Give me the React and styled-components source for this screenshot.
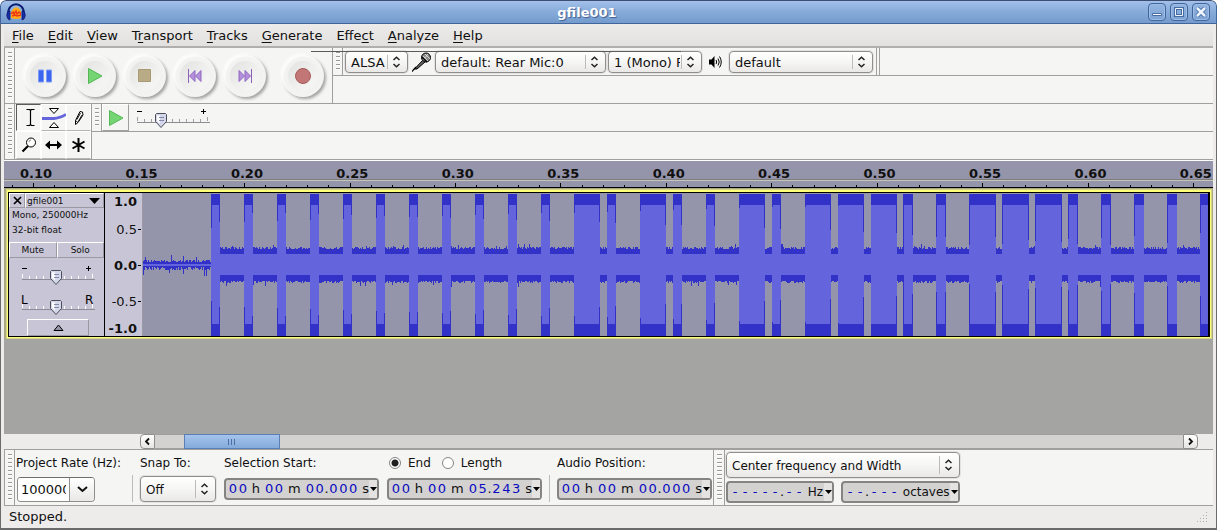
import React from "react";
import styled, { createGlobalStyle, css } from "styled-components";

const GlobalStyle = createGlobalStyle`
  *, *::before, *::after { box-sizing: border-box; }
  body { margin: 0; font-family: "DejaVu Sans", sans-serif; font-size: 13px; color: #101010; background: #fff; }
  button, select, input { font: inherit; color: inherit; margin: 0; }
  svg { display: block; }
`;

const LINE = "#a09f9e";
const PANEL = "#f5f5f4";

/* ---------- window frame ---------- */

const Window = styled.div`
  display: flex;
  flex-direction: column;
  min-height: 100vh;
  background: #edeceb;
  border-bottom: 2px solid #6b6b6b;
  border-radius: 6px 6px 0 0;
  overflow: hidden;
`;

const TitleBar = styled.header`
  display: flex;
  align-items: center;
  height: 24px;
  padding: 0 6px 0 5px;
  background: linear-gradient(#a3c0ea, #86abd9 50%, #749bcd);
  border-top: 1px solid #3c4f73;
  border-bottom: 1px solid #42669c;
  border-left: 1px solid #42669c;
  border-right: 1px solid #42669c;
  border-radius: 6px 6px 0 0;
`;

const Title = styled.h1`
  flex: 1;
  margin: 0;
  padding-top: 2px;
  text-align: center;
  font-size: 13px;
  line-height: 20px;
  color: #fff;
  text-shadow: 1px 1px 1px #3c5f96;
`;

const WindowButtons = styled.div`
  display: flex;
  gap: 4px;
`;

const WindowButton = styled.button`
  width: 18px;
  height: 18px;
  padding: 0;
  border: 1px solid #41669b;
  border-radius: 4px;
  background: linear-gradient(#93b5e2, #7da3d3);
  box-shadow: inset 0 0 0 1px #9dbce6;
`;

const Frame = styled.div`
  flex: 1;
  display: flex;
  flex-direction: column;
  border-left: 1px solid #6b6b6b;
  border-right: 1px solid #6b6b6b;
  padding: 0 3px;
`;

const MenuBar = styled.nav`
  display: flex;
  height: 24px;
  padding-left: 1px;
  border-bottom: 2px solid #b0afad;
  background: linear-gradient(#edecea, #e2e1df);
`;

const MenuButton = styled.button`
  padding: 2px 7px 0;
  border: 0;
  background: none;
  line-height: 20px;
  u { text-underline-offset: 2px; }
`;

/* ---------- toolbars ---------- */

const Dock = styled.div`
  position: relative;
  display: flex;
  background: ${PANEL};
  border-left: 1px solid ${LINE};
  border-bottom: 1px solid ${LINE};
`;

const Toolbar = styled.div`
  display: flex;
  border-right: 1px solid ${LINE};
`;

const ToolRows = styled.div`
  flex: 1;
  display: grid;
  grid-template-rows: 28px 27px;
`;

const ToolRow = styled.div`
  display: flex;
  border-bottom: ${(p) => (p.$last ? "0" : `1px solid ${LINE}`)};
`;

const Grip = styled.div`
  width: ${(p) => p.$width || 10}px;
  padding: 4px 2px 4px 3px;
  border-right: 1px solid ${LINE};
  &::before {
    content: "";
    display: block;
    height: 100%;
    background: repeating-linear-gradient(#9a9998 0 1px, #fff 1px 2px, transparent 2px 4px);
  }
`;

const TransportButtons = styled.div`
  display: flex;
  align-items: center;
  height: 55px;
  padding: 0 4px 0 5px;
`;

const RoundButton = styled.button`
  display: grid;
  place-items: center;
  width: 42px;
  height: 42px;
  margin: 0 4px;
  padding: 0;
  border: 0;
  border-radius: 50%;
  background: #f3f3f2;
  box-shadow: 2px 2px 3px #a4a4a2, -1px -1px 3px #fff, inset 1px 1px 2px #fff;
  ${(p) => p.$apart && css`margin-left: 12px;`}
`;

const Dish = styled.span`
  display: grid;
  place-items: center;
  width: 30px;
  height: 30px;
  border-radius: 50%;
  background: linear-gradient(135deg, #e2e2e1, #f4f4f3 75%);
  box-shadow: 0 0 3px 1px #f0f0ef;
`;

const StrayLine = styled.div`
  position: absolute;
  top: 3px;
  left: 306px;
  width: 370px;
  height: 1px;
  background: #5c5b5a;
`;

const DeviceTools = styled.div`
  display: flex;
  align-items: center;
  padding: 0 3px 0 2px;
  border-right: 1px solid ${LINE};
`;

const EndCap = styled.div`
  width: 3px;
  border-right: 1px solid ${LINE};
`;

const IconCell = styled.span`
  display: grid;
  place-items: center;
  width: ${(p) => p.$width}px;
`;

const SelectBox = styled.span`
  position: relative;
  display: block;
  width: ${(p) => p.$width}px;
  svg { position: absolute; right: 7px; top: 50%; margin-top: -6px; pointer-events: none; }
  &::after {
    content: "";
    position: absolute;
    right: 20px;
    top: 4px;
    bottom: 4px;
    border-left: 1px solid #bdbcba;
  }
`;

const Select = styled.select`
  appearance: none;
  display: block;
  width: 100%;
  height: ${(p) => p.$height}px;
  padding: 2px 21px 0 5px;
  border: 1px solid #8f8e8c;
  border-radius: 4px;
  background: linear-gradient(#fff, #f6f6f5 50%, #e9e8e7);
  font-size: ${(p) => p.$size || 13}px;
  box-shadow: 0 0 0 1px #e3e2e1;
`;

const ToolGrid = styled.div`
  display: grid;
  grid-template-columns: repeat(3, 25px);
  grid-template-rows: 27px 28px;
  padding-left: 1px;
`;

const ToolButton = styled.button`
  display: grid;
  place-items: center;
  padding: ${(p) => (p.$on ? "0 0 0 3px" : "0")};
  border: 1px solid;
  border-color: ${(p) => (p.$on ? "#5a5a5a #fff #fff #5a5a5a" : "#fff #fff #b5b4b2 #fff")};
  background: ${PANEL};
`;

const PlayButton = styled.button`
  display: grid;
  place-items: center;
  width: 27px;
  padding: 0;
  border: 1px solid;
  border-color: #fff ${LINE} ${LINE} #fff;
  background: ${PANEL};
`;

const SliderBox = styled.span`
  position: relative;
  display: block;
  width: 74px;
  height: 20px;
  margin: ${(p) => p.$margin};
  input { position: absolute; inset: 0; width: 100%; height: 100%; opacity: 0; }
`;

/* ---------- timeline ---------- */

const Ruler = styled.div`
  height: 28px;
  border-top: 1px solid #fff;
  border-bottom: 1px solid #000;
  background: #9494aa;
`;

const RulerLabels = styled.div`
  display: flex;
  justify-content: space-between;
  height: 19px;
  padding: 5px 1px 0 16px;
  border-bottom: 1px solid #7d7d80;
  font-weight: bold;
  line-height: 16px;
`;

const RulerTicks = styled.div`
  display: flex;
  justify-content: space-between;
  height: 7px;
  padding: 2px 18px 0 8px;
  border-top: 1px solid #c4c4b8;
`;

const Tick = styled.i`
  width: 1px;
  height: ${(p) => (p.$major ? 4 : 2)}px;
  margin-top: ${(p) => (p.$major ? 0 : 2)}px;
  background: #000;
`;

/* ---------- track ---------- */

const TrackArea = styled.main`
  flex: 1;
  background: #a4a4a2;
`;

const TrackOutline = styled.div`
  padding: 2px 2px 1px 3px;
  background: #a9a984;
  margin-bottom: 1px;
`;

const Track = styled.section`
  display: flex;
  height: 148px;
  border: 1px solid #ffff78;
  border-top-width: 2px;
  outline: 1px solid #d4d488;
`;

const TrackBody = styled.div`
  flex: 1;
  display: flex;
  min-width: 0;
  border: 1px solid #000;
  border-right-width: 2px;
  background: #c8c6d6;
`;

const TrackPanel = styled.div`
  flex: none;
  display: flex;
  flex-direction: column;
  width: 96px;
  border-right: 1px solid #000;
  font-size: 9px;
`;

const bevel = css`
  padding: 0;
  border: 1px solid;
  border-color: #fff #9b9aa4 #9b9aa4 #fff;
  background: #c8c6d6;
`;

const TrackTitle = styled.div`
  display: grid;
  grid-template-columns: 16px 1fr;
  height: 15px;
`;

const BevelButton = styled.button`
  ${bevel}
  display: flex;
  align-items: center;
  justify-content: ${(p) => (p.$spread ? "space-between" : "center")};
  ${(p) => p.$spread && css`padding: 0 3px 0 1px;`}
`;

const TrackInfo = styled.p`
  margin: 0;
  height: 34px;
  padding-left: 3px;
  line-height: 15px;
  white-space: nowrap;
`;

const MuteSolo = styled.div`
  display: grid;
  grid-template-columns: 1fr 1fr;
  height: 16px;
`;

const Collapse = styled.button`
  ${bevel}
  display: grid;
  place-items: center;
  width: 62px;
  height: 17px;
  margin: 0 auto 0 18px;
`;

const Scale = styled.div`
  flex: none;
  display: grid;
  grid-template-rows: 16px 40px 32px 40px 1fr;
  align-items: center;
  width: 38px;
  border-right: 1px solid #9b9aa4;
`;

const ScaleMark = styled.span`
  display: flex;
  align-items: center;
  justify-content: flex-end;
  padding-right: ${(p) => (p.$tick ? 1 : 5)}px;
  font-weight: ${(p) => (p.$bold ? "bold" : "normal")};
  line-height: 15px;
  &::after {
    content: "";
    display: ${(p) => (p.$tick ? "block" : "none")};
    width: 3px;
    height: 1px;
    margin-left: 1px;
    background: #000;
  }
`;

const WaveSvg = styled.svg`
  flex: 1;
  min-width: 0;
  height: 100%;
`;

/* ---------- scroll bar ---------- */

const ScrollRow = styled.div`
  display: flex;
  height: 16px;
  padding: 0 15px 0 136px;
  border-bottom: 1px solid ${LINE};
`;

const ScrollButton = styled.button`
  display: grid;
  place-items: center;
  width: 15px;
  padding: 0;
  border: 1px solid #8f8e8c;
  border-radius: ${(p) => (p.$right ? "0 4px 4px 0" : "4px 0 0 4px")};
  background: linear-gradient(#fff, #e6e5e4);
`;

const Trough = styled.div`
  flex: 1;
  padding-left: 29px;
  background: #d3d2d0;
  border: solid ${LINE};
  border-width: 1px 0;
`;

const Thumb = styled.div`
  display: grid;
  place-items: center;
  width: 10%;
  max-width: 96px;
  height: 15px;
  margin-top: -1px;
  border: 1px solid #5a7fb4;
  background: linear-gradient(#a5c3ec, #85abdb);
`;

/* ---------- selection toolbar ---------- */

const SelectionTools = styled.div`
  display: flex;
  height: 55px;
  padding-left: 1px;
  font-size: 12px;
`;

const Field = styled.div`
  display: grid;
  grid-template-rows: 24px 28px;
  align-items: center;
  width: ${(p) => p.$width}px;
  padding: 1px 0 0;
  > label, > span { white-space: nowrap; }
`;

const Divider = styled.i`
  width: 1px;
  height: 27px;
  margin: 25px 7px 0 ${(p) => p.$left}px;
  background: #bdbcba;
`;

const RateBox = styled.div`
  display: flex;
  width: 78px;
  height: 25px;
  margin-left: 1px;
  border: 1px solid #8f8e8c;
  border-top-color: #6f6e6c;
  border-radius: 4px;
  background: #fff;
  overflow: hidden;
`;

const RateInput = styled.input`
  width: 51px;
  min-width: 0;
  padding: 0 0 0 3px;
  border: 0;
  border-right: 3px solid #fff;
  background: #fff;
  font-size: 13px;
`;

const RateDrop = styled.button`
  flex: 1;
  display: grid;
  place-items: center;
  padding: 0;
  border: 0;
  border-left: 1px solid #8f8e8c;
  background: linear-gradient(#fff, #e9e8e7);
`;

const TimeBox = styled.div`
  display: flex;
  align-items: stretch;
  width: ${(p) => p.$width}px;
  height: 22px;
  padding-left: 2px;
  border: 2px solid #858483;
  border-radius: 4px;
  background: #d3d2d1;
  font-size: ${(p) => p.$size || 13}px;
  line-height: 18px;
  white-space: pre;
`;

const Digit = styled.b`
  width: ${(p) => (p.$dot ? 4 : 10)}px;
  font-weight: normal;
  font-size: 13px;
  text-align: center;
  color: ${(p) => (p.$dot ? "#101010" : "#0a0ac0")};
`;

const TimeDrop = styled.button`
  display: grid;
  place-items: center;
  flex: none;
  width: 8px;
  margin: 0 0 0 auto;
  padding: 0;
  border: 0;
  background: #e4e3e2;
`;

const RadioRow = styled.div`
  display: flex;
  align-items: center;
  padding-left: 2px;
  label { margin: 0 11px 0 7px; }
`;

const Radio = styled.input`
  appearance: none;
  width: 12px;
  height: 12px;
  border: 1px solid #858483;
  border-radius: 50%;
  background: #fff;
  &:checked { background: radial-gradient(circle, #202020 0 3px, #fff 4px); }
`;

const FrequencyTools = styled.div`
  display: flex;
  flex-direction: column;
  gap: 3px;
  padding: 2px 0 0 1px;
  font-size: 12px;
`;

const FrequencyPair = styled.div`
  display: flex;
  gap: 7px;
`;

const StatusBar = styled.footer`
  display: flex;
  justify-content: space-between;
  align-items: flex-end;
  height: 22px;
  padding: 0 4px 4px 5px;
  line-height: 15px;
`;

/* ---------- drawings ---------- */

const AppIcon = () => (
  <svg width="20" height="20" viewBox="0 0 20 20" aria-hidden="true">
    <path d="M2 12C2 -1 18 -1 18 12" fill="none" stroke="#0b1d70" strokeWidth="2" />
    <path d="M5 16V10Q7 6 10 5q4 1 5 5v6q-5 2-10 0z" fill="#ffab1c" />
    <path d="M5 12l2-2 1 2 2-3 1 3 2-2 2 2M6 14l3-1 2 1 4-1" fill="none" stroke="#ec3414" strokeWidth="1.4" />
    <path d="M3 9q-4 3-1 8l2 1V9zM17 9q4 3 1 8l-2 1V9z" fill="#1a2ea8" stroke="#0a1468" strokeWidth=".7" />
  </svg>
);

const Chevrons = () => (
  <svg width="9" height="12" viewBox="0 0 9 12" fill="none" stroke="#222" strokeWidth="1.5" aria-hidden="true">
    <path d="M1.5 4L4.5 1.3 7.5 4M1.5 8l3 2.7L7.5 8" />
  </svg>
);

const DownTriangle = ({ w = 7, h = 4, fill = "#000" }) => (
  <svg width={w} height={h} viewBox="0 0 8 5" preserveAspectRatio="none" aria-hidden="true">
    <path d="M0 0h8L4 5z" fill={fill} />
  </svg>
);

const PlayShape = () => (
  <svg width="16" height="18" viewBox="0 0 16 18" aria-hidden="true">
    <path d="M1.5 1.5L15 9 1.5 16.5z" fill="#74d572" stroke="#55b858" />
  </svg>
);

const TRANSPORT = [
  ["Pause", <svg width="14" height="14" viewBox="0 0 14 14"><path d="M.5 1h5v12h-5zM8.500 1h5v12h-5z" fill="#3c66f0" stroke="#7c9af6" /></svg>],
  ["Play", <PlayShape />],
  ["Stop", <svg width="14" height="14" viewBox="0 0 14 14"><path d="M.5 .5h12v12H.5z" fill="#b8ab86" stroke="#a89a72" /></svg>],
  ["Skip to start", <svg width="14" height="14" viewBox="0 0 14 14"><path d="M.5 0v14" stroke="#8a62b8" /><path d="M7 1.5v11L1.5 7zM13 1.5v11L7.5 7z" fill="#b38fdc" stroke="#9067c0" /></svg>],
  ["Skip to end", <svg width="14" height="14" viewBox="0 0 14 14"><path d="M13.5 0v14" stroke="#8a62b8" /><path d="M1 1.5v11L6.5 7zM7 1.5v11L12.5 7z" fill="#b38fdc" stroke="#9067c0" /></svg>],
  ["Record", <svg width="18" height="18" viewBox="0 0 18 18"><circle cx="9" cy="9" r="7.5" fill="#c27676" stroke="#a65c5c" /></svg>],
];

const TOOLS = [
  ["Selection tool", <svg width="9" height="17" viewBox="0 0 9 17" fill="none" stroke="#000" strokeWidth="1.200"><path d="M.5 .5h3l1 1 1-1h3M4.5 1v15M.5 16.5h3l1-1 1 1h3" /></svg>],
  ["Envelope tool", <svg width="24" height="20" viewBox="0 0 24 20"><path d="M0 10.500h12q5 0 12-4" fill="none" stroke="#6464dc" strokeWidth="2.800" /><path d="M7.5 .5h9L12 5.5zM7.5 19.5h9L12 14.5z" fill="#fff" stroke="#000" /></svg>],
  ["Draw tool", <svg width="10" height="16" viewBox="0 0 10 16"><path d="M6 1.5L8.5 2 9 5 4 12.5 1.5 14.5V10.500z" fill="#fff" stroke="#000" /><path d="M1.500 10.500L4 12.500M6.500 3L3 9.500M8 5L4.500 11" stroke="#000" strokeWidth=".9" /></svg>],
  ["Zoom tool", <svg width="16" height="16" viewBox="0 0 16 16"><circle cx="10" cy="5.500" r="4.500" fill="#fff" stroke="#000" /><path d="M7 9L1.500 14.500" stroke="#000" strokeWidth="2.200" /><path d="M8 5q0-2 2-2" fill="none" stroke="#888" /></svg>],
  ["Time shift tool", <svg width="17" height="10" viewBox="0 0 17 10"><path d="M3 5h11" stroke="#000" strokeWidth="1.800" /><path d="M5 .5v9L0 5zM12 .5v9L17 5z" /></svg>],
  ["Multi-tool", <svg width="13" height="14" viewBox="0 0 13 14" stroke="#000" strokeWidth="2"><path d="M6.500 0v14M.5 3.500l12 7M12.500 3.500l-12 7" /></svg>],
];

const Mic = () => (
  <svg width="20" height="20" viewBox="0 0 20 20" aria-hidden="true">
    <path d="M11 8L13 10 5 17 2.500 17z" fill="#666" stroke="#000" />
    <path d="M4 15L0 19.500" stroke="#000" strokeWidth="1.200" />
    <circle cx="14" cy="5.500" r="4.500" fill="#888" stroke="#000" />
    <path d="M11 4l5 5M13 2l5 5M16 2l-5 6" stroke="#e8e8e8" strokeWidth=".8" />
    <path d="M10 5l5 5" stroke="#000" strokeWidth="1.500" />
  </svg>
);

const Speaker = () => (
  <svg width="14" height="14" viewBox="0 0 14 14" aria-hidden="true">
    <path d="M0 4.500h2.500L5.500 1v12L2.500 9.500H0z" />
    <path d="M7 5q1.500 2 0 4M9 3.500q2.500 3.500 0 7M10.500 1.500q3.500 5.500 0 11" fill="none" stroke="#000" />
  </svg>
);

function Slider({ label, value, ends, margin, tick = "#fff" }) {
  const x = 18 + Math.round(value * 34);
  return (
    <SliderBox $margin={margin}>
      <svg width="74" height="20" viewBox="0 0 74 20" overflow="visible" aria-hidden="true">
        {ends === "pan" ? (
          <g fontSize="12"><text x="-1" y="9">L</text><text x="63" y="9">R</text></g>
        ) : (
          <path d="M0 3.500h5M64 3.500h5M66.500 1v5" stroke="#000" />
        )}
        <g stroke={tick} shapeRendering="crispEdges">
          {Array.from({ length: 11 }, (_, i) => (
            <path key={i} d={`M${i * 7 + 0.5} ${i % 10 ? 11 : 9}v4`} />
          ))}
        </g>
        <path d="M0 14.500h73" stroke="#8e8d96" />
        <path d={`M${x - 5.500} 6.500l1-1h9l1 1v7l-5.500 6-5.500-6z`} fill="#d4d6ea" stroke="#4c4e5a" />
        <path d={`M${x - 4} 7.500h3v8l-3-3z`} fill="#fff" />
        <path d={`M${x - 2} 9.500h5M${x - 2} 12.500h5`} stroke="#8487a8" />
      </svg>
      <input type="range" min="0" max="100" defaultValue={value * 100} aria-label={label} />
    </SliderBox>
  );
}

/* Loud bursts of the signal: start, width, depth of the left and right edge. */
const BURSTS = [
  [68, 9, 35, 29], [101, 9, 29, 20], [134, 9, 28, 20], [167, 9, 27, 21], [200, 9, 26, 22],
  [233, 9, 25, 23], [266, 9, 24, 24], [299, 9, 23, 25], [332, 9, 22, 26], [365, 9, 21, 27],
  [398, 9, 20, 28], [431, 26, 20, 29], [464, 9, 19, 30], [497, 26, 18, 32], [530, 9, 17, 32],
  [563, 9, 16, 33], [596, 26, 15, 35], [629, 9, 14, 36], [662, 26, 14, 37], [695, 26, 13, 39],
  [728, 26, 12, 40], [760, 10, 71, 42], [793, 10, 44, 44], [826, 27, 52, 44], [859, 27, 51, 47],
  [892, 27, 48, 49], [925, 10, 46, 51], [958, 10, 45, 52], [991, 10, 43, 12], [1024, 10, 50, 12],
  [1057, 8, 40, 12],
];

function noise(seed) {
  let s = seed;
  return () => {
    s = (s * 1103515245 + 12345) % 2147483648;
    return s / 2147483648;
  };
}

function buildNoise() {
  const rnd = noise(7);
  let d = "";
  for (let x = 0; x < 68; x++) {
    const up = 2 + Math.floor(rnd() * 3) + (rnd() > 0.92 ? 5 : 0);
    const down = 2 + Math.floor(rnd() * 4) + (rnd() > 0.92 ? 6 : 0);
    d += `M${x} ${71 - up}h1v${up + down + 1}h-1z`;
  }
  for (let x = 68; x < 1065; x++) {
    const up = Math.floor(rnd() * 3) + (rnd() > 0.95 ? 3 : 0);
    const down = Math.floor(rnd() * 2.6) + (rnd() > 0.98 ? 4 : 0);
    d += `M${x} ${56 - up}h1v${32 + up + down}h-1z`;
  }
  return d;
}

const NOISE = buildNoise();
const burstPath = BURSTS.map(([x, w]) => `M${x} 1h${w}v142h-${w}z`).join("");
const corePath = BURSTS.map(([x, w, l, r]) =>
  `M${x + 1} 12h${w - 2}v119h-${w - 2}zM${x} ${l}h1v${143 - 2 * l}h-1zM${x + w - 1} ${r}h1v${143 - 2 * r}h-1z`
).join("");

const Waveform = () => (
  <WaveSvg viewBox="0 0 1065 143" preserveAspectRatio="none" shapeRendering="crispEdges" role="img" aria-label="Waveform of gfile001">
    <path d="M0 0h1065v143H0z" fill="#9494aa" />
    <path d={NOISE} fill="#3232c8" />
    <path d="M0 71h68v2H0z" fill="#6464dc" />
    <path d={burstPath} fill="#3232c8" />
    <path d={corePath} fill="#6464dc" />
    <path d="M68 61h997v21H68z" fill="#6464dc" />
  </WaveSvg>
);

/* ---------- composed controls ---------- */

function Combo({ label, width, height = 22, size, options, id }) {
  return (
    <SelectBox $width={width}>
      <Select id={id} aria-label={label} $height={height} $size={size}>
        {options.map((o) => <option key={o}>{o}</option>)}
      </Select>
      <Chevrons />
    </SelectBox>
  );
}

function Counter({ label, width, value, size }) {
  return (
    <TimeBox role="group" aria-label={label} $width={width} $size={size}>
      {value.split("").map((c, i) =>
        /[\d.-]/.test(c) ? <Digit key={i} $dot={c === "."}>{c}</Digit> : <span key={i}>{c}</span>
      )}
      <TimeDrop aria-label={`${label} format`}><DownTriangle /></TimeDrop>
    </TimeBox>
  );
}

const MENUS = [["", "F", "ile"], ["", "E", "dit"], ["", "V", "iew"], ["T", "r", "ansport"], ["", "T", "racks"], ["", "G", "enerate"], ["Effe", "c", "t"], ["", "A", "nalyze"], ["", "H", "elp"]];
const TIMES = ["0.10", "0.15", "0.20", "0.25", "0.30", "0.35", "0.40", "0.45", "0.50", "0.55", "0.60", "0.65"];

export default function App() {
  return (
    <Window>
      <GlobalStyle />
      <TitleBar>
        <AppIcon />
        <Title>gfile001</Title>
        <WindowButtons>
          <WindowButton aria-label="Minimize">
            <svg width="16" height="16" viewBox="0 0 16 16"><path d="M3.500 9.500h9v2h-9z" fill="#fff" stroke="#466ca3" /></svg>
          </WindowButton>
          <WindowButton aria-label="Maximize">
            <svg width="16" height="16" viewBox="0 0 16 16" fill="none"><path d="M4.500 4.500h7v7h-7z" stroke="#466ca3" strokeWidth="3" /><path d="M4.500 4.500h7v7h-7z" stroke="#eef4fc" strokeWidth="1" /></svg>
          </WindowButton>
          <WindowButton aria-label="Close">
            <svg width="16" height="16" viewBox="0 0 16 16" fill="none"><path d="M4 4l8 8M12 4l-8 8" stroke="#466ca3" strokeWidth="4.500" /><path d="M4 4l8 8M12 4l-8 8" stroke="#eef4fc" strokeWidth="2.500" /></svg>
          </WindowButton>
        </WindowButtons>
      </TitleBar>

      <Frame>
        <MenuBar>
          {MENUS.map(([a, k, b]) => <MenuButton key={a + k + b}>{a}<u>{k}</u>{b}</MenuButton>)}
        </MenuBar>

        <Dock>
          <Toolbar>
            <Grip />
            <TransportButtons>
              {TRANSPORT.map(([name, icon]) => (
                <RoundButton key={name} aria-label={name} $apart={name === "Record"}><Dish>{icon}</Dish></RoundButton>
              ))}
            </TransportButtons>
          </Toolbar>
          <ToolRows>
            <ToolRow>
              <Grip />
              <DeviceTools>
                <Combo label="Audio host" width={63} options={["ALSA"]} />
                <IconCell $width={27}><Mic /></IconCell>
                <Combo label="Recording device" width={171} options={["default: Rear Mic:0"]} />
                <IconCell $width={2} />
                <Combo label="Recording channels" width={94} options={["1 (Mono) Rear Mic"]} />
                <IconCell $width={27}><Speaker /></IconCell>
                <Combo label="Playback device" width={144} options={["default"]} />
              </DeviceTools>
              <EndCap />
            </ToolRow>
          </ToolRows>
          <StrayLine />
        </Dock>

        <Dock>
          <Toolbar>
            <Grip />
            <ToolGrid>
              {TOOLS.map(([name, icon], i) => <ToolButton key={name} aria-label={name} $on={i === 0}>{icon}</ToolButton>)}
            </ToolGrid>
          </Toolbar>
          <ToolRows>
            <ToolRow>
              <Grip />
              <PlayButton aria-label="Play at speed"><PlayShape /></PlayButton>
              <Slider label="Playback speed" value={0.17} margin="4px 0 0 8px" tick="#a09f9e" />
            </ToolRow>
          </ToolRows>
        </Dock>

        <Ruler>
          <RulerLabels>{TIMES.map((t) => <span key={t}>{t}</span>)}</RulerLabels>
          <RulerTicks>{Array.from({ length: 57 }, (_, i) => <Tick key={i} $major={i % 5 === 1} />)}</RulerTicks>
        </Ruler>

        <TrackArea>
          <TrackOutline>
            <Track>
              <TrackBody>
                <TrackPanel>
                  <TrackTitle>
                    <BevelButton aria-label="Close track">
                      <svg width="9" height="9" viewBox="0 0 9 9"><path d="M1 1l7 7M8 1L1 8" stroke="#000" strokeWidth="1.700" /></svg>
                    </BevelButton>
                    <BevelButton $spread>gfile001<DownTriangle w={11} h={6} /></BevelButton>
                  </TrackTitle>
                  <TrackInfo>Mono, 250000Hz<br />32-bit float</TrackInfo>
                  <MuteSolo>
                    <BevelButton>Mute</BevelButton>
                    <BevelButton>Solo</BevelButton>
                  </MuteSolo>
                  <Slider label="Gain" value={0.47} margin="7px 0 10px 13px" />
                  <Slider label="Pan" value={0.47} ends="pan" margin="0 0 4px 13px" />
                  <Collapse aria-label="Collapse track">
                    <svg width="11" height="7" viewBox="0 0 11 7"><path d="M1 6.500h9L5.500 1z" fill="#9494aa" stroke="#000" /></svg>
                  </Collapse>
                </TrackPanel>
                <Scale>
                  <ScaleMark $bold>1.0</ScaleMark>
                  <ScaleMark $tick>0.5</ScaleMark>
                  <ScaleMark $bold $tick>0.0</ScaleMark>
                  <ScaleMark $tick>-0.5</ScaleMark>
                  <ScaleMark $bold>-1.0</ScaleMark>
                </Scale>
                <Waveform />
              </TrackBody>
            </Track>
          </TrackOutline>
        </TrackArea>

        <ScrollRow>
          <ScrollButton aria-label="Scroll left">
            <svg width="7" height="9" viewBox="0 0 7 9"><path d="M5 1.500L2 4.500l3 3" fill="none" stroke="#111" strokeWidth="1.800" /></svg>
          </ScrollButton>
          <Trough>
            <Thumb>
              <svg width="8" height="6" viewBox="0 0 8 6"><path d="M.5 0v6M3.500 0v6M6.500 0v6" stroke="#4a6fa5" /></svg>
            </Thumb>
          </Trough>
          <ScrollButton $right aria-label="Scroll right">
            <svg width="7" height="9" viewBox="0 0 7 9"><path d="M2 1.500l3 3-3 3" fill="none" stroke="#111" strokeWidth="1.800" /></svg>
          </ScrollButton>
        </ScrollRow>

        <Dock>
          <Toolbar>
            <Grip />
            <SelectionTools>
              <Field $width={105}>
                <label htmlFor="rate">Project Rate (Hz):</label>
                <RateBox>
                  <RateInput id="rate" defaultValue="1000000" />
                  <RateDrop aria-label="Choose rate">
                    <svg width="11" height="7" viewBox="0 0 11 7"><path d="M1 1l4.500 4L10 1" fill="none" stroke="#111" strokeWidth="2" /></svg>
                  </RateDrop>
                </RateBox>
              </Field>
              <Divider $left={11} />
              <Field $width={84}>
                <label htmlFor="snap">Snap To:</label>
                <Combo id="snap" label="Snap To" width={76} height={26} size={12} options={["Off"]} />
              </Field>
              <Field $width={163}>
                <span>Selection Start:</span>
                <Counter label="Selection Start" width={155} value="00 h 00 m 00.000 s" />
              </Field>
              <Field $width={155}>
                <RadioRow>
                  <Radio type="radio" name="bound" id="end" defaultChecked /><label htmlFor="end">End</label>
                  <Radio type="radio" name="bound" id="length" /><label htmlFor="length">Length</label>
                </RadioRow>
                <Counter label="Selection End" width={155} value="00 h 00 m 05.243 s" />
              </Field>
              <Divider $left={7} />
              <Field $width={156}>
                <span>Audio Position:</span>
                <Counter label="Audio Position" width={155} value="00 h 00 m 00.000 s" />
              </Field>
            </SelectionTools>
          </Toolbar>
          <Grip $width={11} />
          <FrequencyTools>
            <Combo label="Spectral selection" width={234} height={26} size={12} options={["Center frequency and Width"]} />
            <FrequencyPair>
              <Counter label="Center frequency" width={108} size={12} value="-----.-- Hz" />
              <Counter label="Bandwidth" width={119} size={12} value="--.--- octaves" />
            </FrequencyPair>
          </FrequencyTools>
        </Dock>

        <StatusBar>
          <span>Stopped.</span>
          <svg width="12" height="12" viewBox="0 0 12 12" fill="#b0afad" aria-hidden="true">
            <path d="M9 0h1v1H9zM6 3h1v1H6zM9 3h1v1H9zM3 6h1v1H3zM6 6h1v1H6zM9 6h1v1H9zM0 9h1v1H0zM3 9h1v1H3zM6 9h1v1H6zM9 9h1v1H9z" />
          </svg>
        </StatusBar>
      </Frame>
    </Window>
  );
}
